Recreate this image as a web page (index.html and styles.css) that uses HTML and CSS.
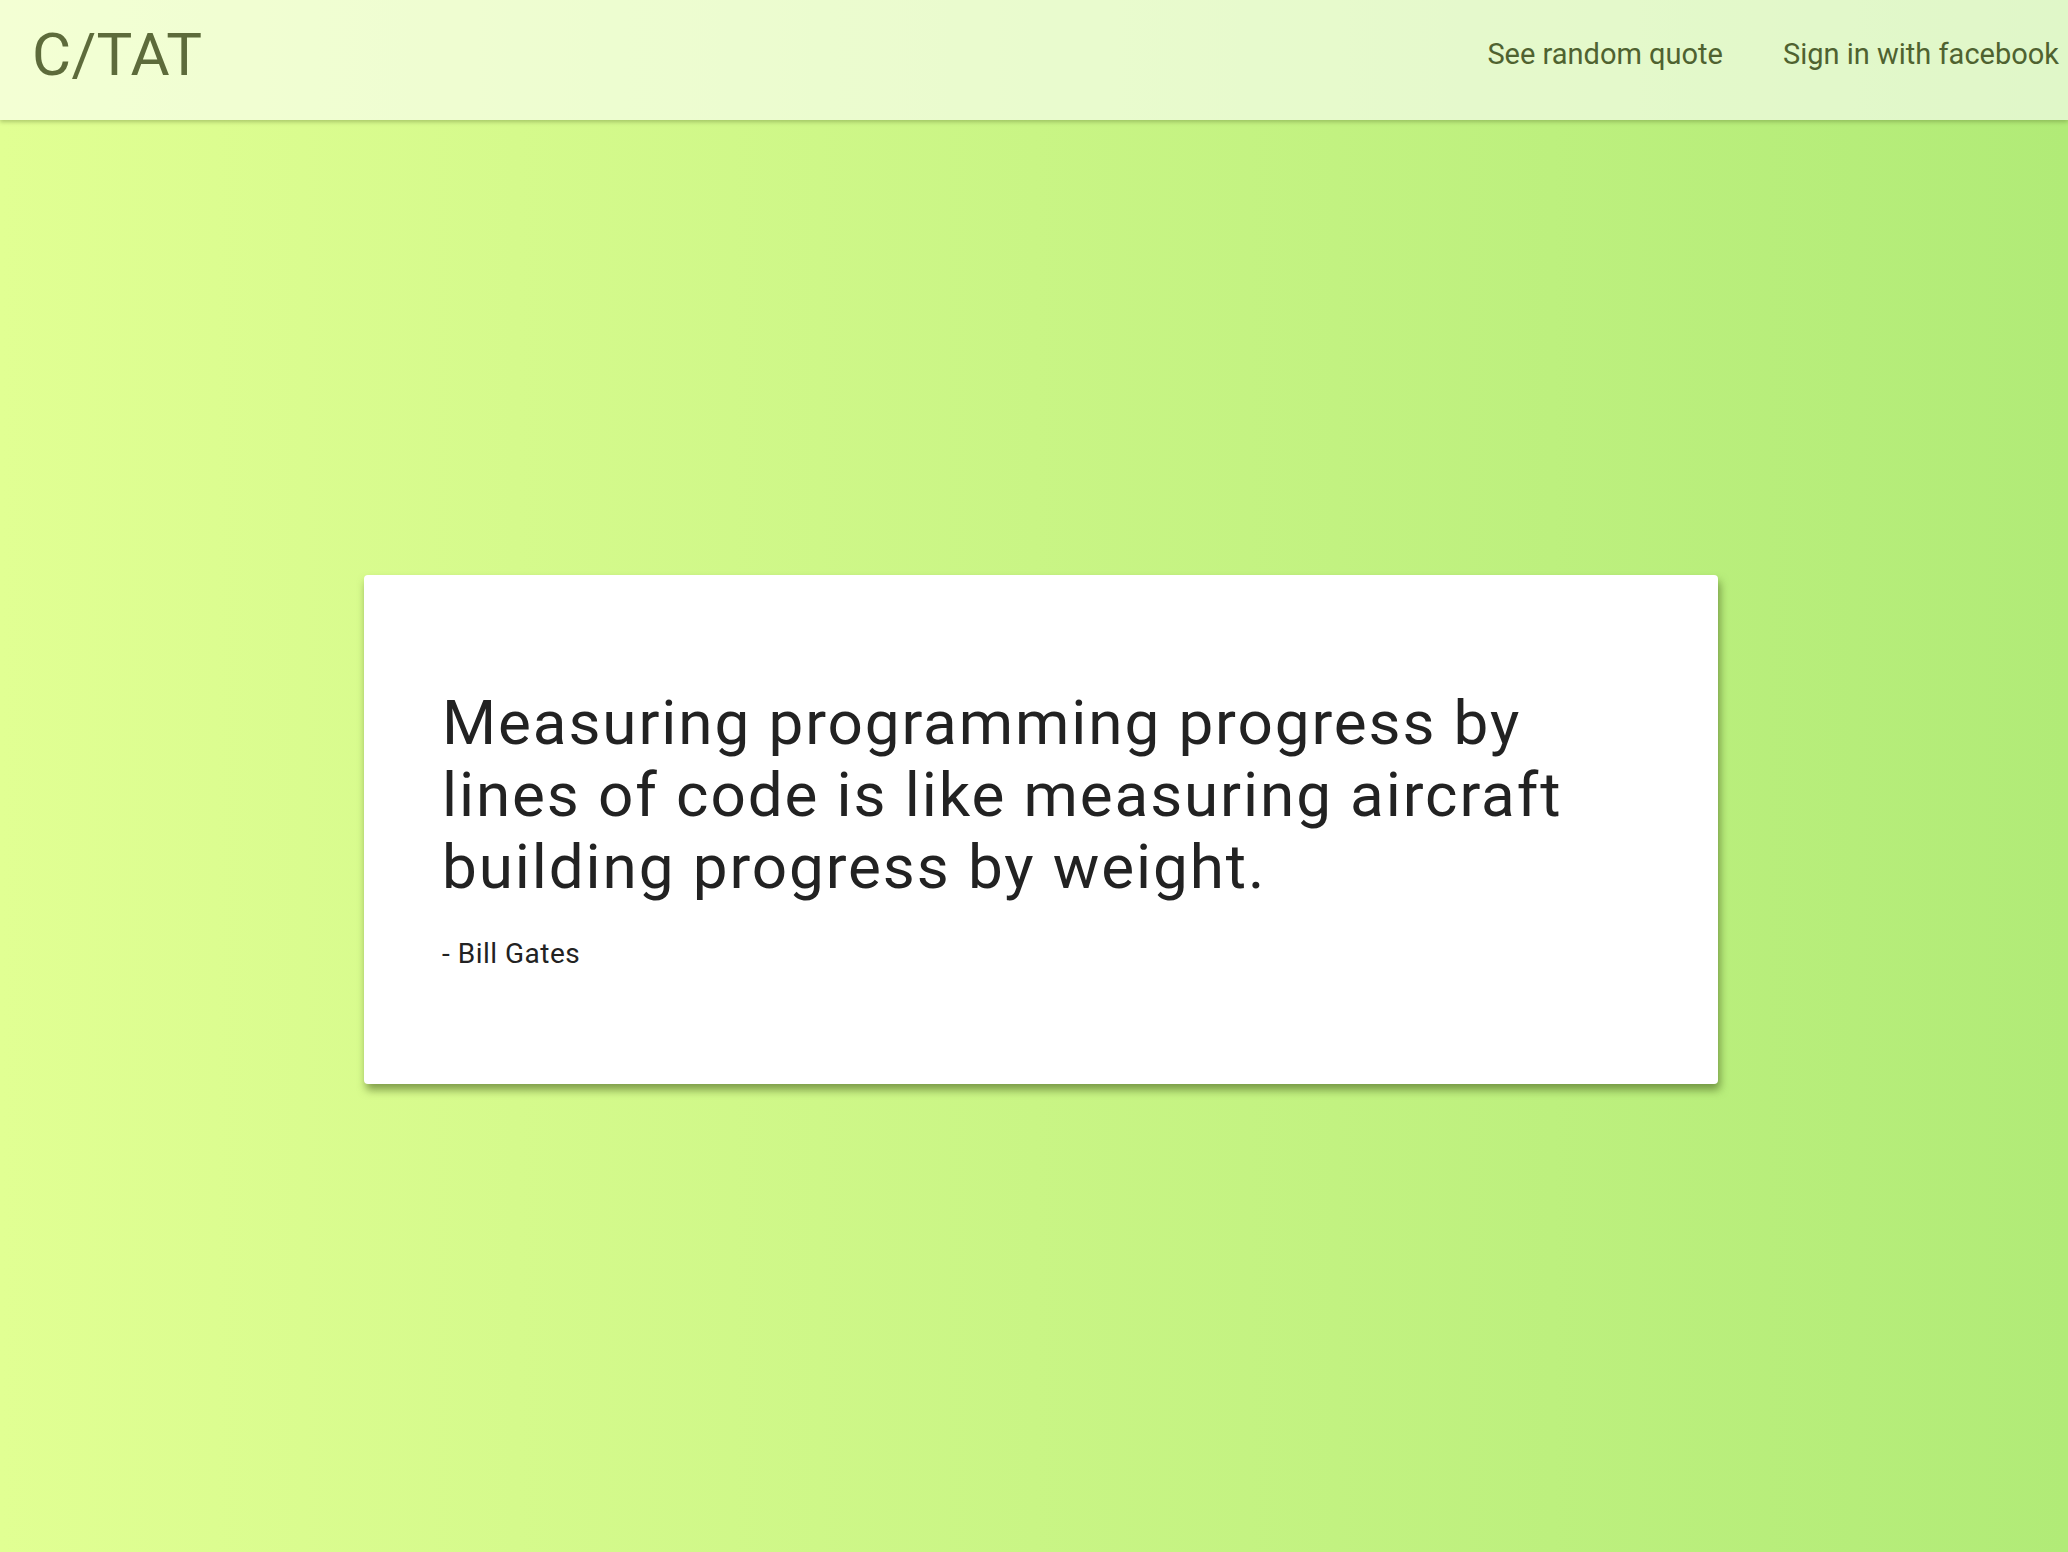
FILE: index.html
```html
<!DOCTYPE html>
<html lang="en">
<head>
<meta charset="utf-8">
<title>C/TAT</title>
<link rel="stylesheet" href="styles.css">
</head>
<body>
<header class="topbar">
  <a class="brand" href="#">C/TAT</a>
  <nav class="nav">
    <a class="nav-link" href="#">See random quote</a>
    <a class="nav-link" href="#">Sign in with facebook</a>
  </nav>
</header>
<main class="stage">
  <section class="card">
    <p class="quote">Measuring programming progress by lines of code is like measuring aircraft building progress by weight.</p>
    <p class="author">- Bill Gates</p>
  </section>
</main>
</body>
</html>
```

FILE: styles.css
```css
html, body {
  margin: 0;
  padding: 0;
}

body {
  min-height: 100vh;
  display: flex;
  flex-direction: column;
  font-family: Roboto, "Liberation Sans", sans-serif;
  background: linear-gradient(to right, #e1ff93, #b1eb77);
}

.topbar {
  box-sizing: border-box;
  height: 120px;
  padding: 0 9px 10px 32px;
  display: flex;
  align-items: center;
  justify-content: space-between;
  background: rgba(255, 255, 255, 0.6);
  box-shadow: 0 2px 4px rgba(60, 80, 20, 0.3);
  position: relative;
  z-index: 1;
}

.brand {
  font-size: 60px;
  letter-spacing: 0.4px;
  line-height: 110px;
  color: #5d6b3b;
  text-decoration: none;
}

.nav {
  display: flex;
  gap: 60px;
  padding-bottom: 2px;
}

.nav-link {
  font-size: 29px;
  color: #4f6230;
  text-decoration: none;
}

.stage {
  flex: 1;
  display: flex;
  align-items: center;
  justify-content: center;
  padding: 0 0 13px 14px;
}

.card {
  box-sizing: border-box;
  width: 1354px;
  padding: 112px 78px 113px;
  background: #ffffff;
  border-radius: 4px;
  box-shadow: 2px 6px 8px rgba(70, 95, 30, 0.6);
}

.quote {
  margin: 0;
  font-size: 62px;
  letter-spacing: 1.9px;
  line-height: 72px;
  color: #222222;
}

.author {
  margin: 34px 0 0;
  font-size: 28px;
  letter-spacing: 0.5px;
  line-height: 34px;
  color: #222222;
}
```
